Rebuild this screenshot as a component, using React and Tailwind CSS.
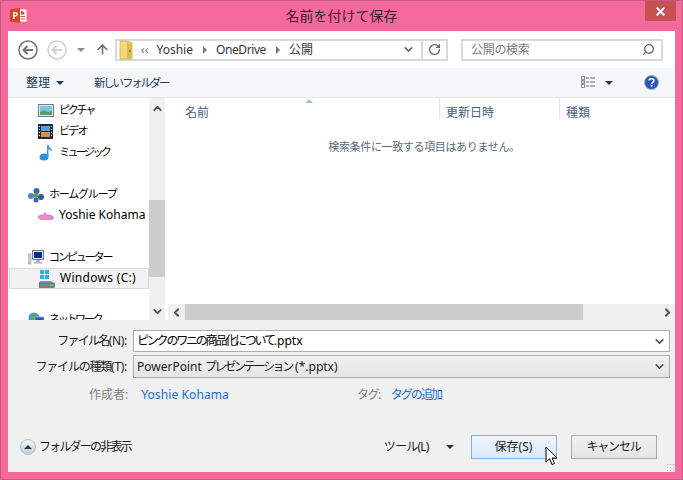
import React from "react";
import { X, ArrowUp, RotateCw, Search, ChevronDown, ChevronUp, ChevronLeft, ChevronRight } from "lucide-react";

const font = { fontFamily: '"Noto Sans", "Noto Sans CJK JP", sans-serif' };

function Caret({ className = "" }) {
  return <span className={`inline-block w-0 h-0 border-x-[4px] border-x-transparent border-t-[4px] ${className}`}></span>;
}

function PptLogo() {
  return (
    <svg width="17" height="15" viewBox="0 0 17 15">
      <rect x="7" y="1.5" width="9.5" height="12" fill="#fff" />
      <path d="M11 3v3.5h3.5A3.5 3.5 0 0 0 11 3z" fill="#d24726" />
      <rect x="10.5" y="8" width="4.5" height="1" fill="#d24726" />
      <rect x="10.5" y="10.5" width="4.5" height="1" fill="#d24726" />
      <path d="M0 1.5 10 0v15L0 13.500z" fill="#d24726" />
      <path d="M3 4h2.600a2 2 0 0 1 0 4.400H4.500V11H3zM4.500 5.300v1.900h.9a.95.95 0 0 0 0-1.900z" fill="#fff" fillRule="evenodd" />
    </svg>
  );
}

function NavCircle({ color }) {
  return (
    <svg width="20" height="20" viewBox="0 0 20 20" fill="none" stroke={color}>
      <circle cx="10" cy="10" r="9" strokeWidth="1.500" />
      <path d="M15 10H6M9.500 6 5.500 10l4 4" strokeWidth="2" />
    </svg>
  );
}

function FolderIcon() {
  return (
    <svg width="14" height="20" viewBox="0 0 14 20">
      <path d="M1 1h7l5 2v16H1z" fill="#f3d675" stroke="#c9a640" strokeWidth="0.700" />
      <path d="M8 2.500 13 4v13l-5 2.500z" fill="#e0b94f" />
      <rect x="10" y="10" width="1.500" height="2" fill="#54789c" />
    </svg>
  );
}

function PictureIcon() {
  return (
    <svg width="16" height="13" viewBox="0 0 16 13">
      <rect x="0.500" y="0.500" width="15" height="12" fill="#dfe6ec" stroke="#6d7f8f" />
      <rect x="2" y="2" width="12" height="9" fill="#7fc3e3" />
      <path d="M2 11V8l4-2 4 2 4-1v4z" fill="#5d9a6d" />
    </svg>
  );
}

function VideoIcon() {
  return (
    <svg width="15" height="15" viewBox="0 0 15 15">
      <rect width="15" height="15" fill="#1e2a38" />
      <rect x="3" y="2" width="9" height="5" fill="#5aa0d8" />
      <rect x="3" y="8" width="9" height="5" fill="#d98f4a" />
      <path d="M1 2h1v1H1zM1 5h1v1H1zM1 8h1v1H1zM1 11h1v1H1zM13 2h1v1h-1zM13 5h1v1h-1zM13 8h1v1h-1zM13 11h1v1h-1z" fill="#fff" />
    </svg>
  );
}

function MusicIcon() {
  return (
    <svg width="14" height="17" viewBox="0 0 14 17">
      <ellipse cx="5" cy="13" rx="4.500" ry="3.500" fill="#2f8fdc" />
      <path d="M8 1h1.500c.5 3 4 3 3.500 7-1-2-2.500-2.500-3.500-2.500V13H8z" fill="#3c9fe6" />
    </svg>
  );
}

function HomegroupIcon() {
  return (
    <svg width="16" height="16" viewBox="0 0 16 16">
      <circle cx="8.500" cy="4" r="3" fill="#3f62b5" />
      <circle cx="3" cy="9" r="3" fill="#5a7dc9" />
      <circle cx="13" cy="10" r="3" fill="#3355a8" />
      <circle cx="8" cy="13" r="2.500" fill="#3f62b5" />
      <circle cx="8" cy="8.500" r="2.500" fill="#54a83f" />
    </svg>
  );
}

function OnlineIcon() {
  return (
    <svg width="16" height="8" viewBox="0 0 16 8">
      <path d="M0 5c1-2 3-2 5-2l2-2.500L9 3c3 0 6 .5 7 3l-2 1.500H2z" fill="#e88ad0" stroke="#b45ea0" strokeWidth="0.500" />
    </svg>
  );
}

function ComputerIcon() {
  return (
    <svg width="16" height="15" viewBox="0 0 16 15">
      <rect x="0" y="4" width="3" height="10" fill="#c9d0d6" stroke="#7f8a92" strokeWidth="0.500" />
      <rect x="4.500" y="0.500" width="11" height="9" fill="#dfe5ea" stroke="#6c7a85" />
      <rect x="6" y="2" width="8" height="6" fill="#10288c" />
      <path d="M8 10h4v2h2v1.500H6V12h2z" fill="#aab4bc" />
    </svg>
  );
}

function DriveIcon() {
  return (
    <svg width="16" height="19" viewBox="0 0 16 19">
      <path d="M1 1h4v4H1zM6 1h4v4H6zM1 6h4v4H1zM6 6h4v4H6z" fill="#19b4ea" />
      <path d="M1 12h11l3 2v4.500H0V14z" fill="#8b979f" />
      <rect x="0.500" y="14" width="15" height="4.500" fill="#76858e" stroke="#4c5860" strokeWidth="0.500" />
      <rect x="11" y="15.500" width="3" height="1.500" fill="#58d05a" />
    </svg>
  );
}

function NetworkIcon() {
  return (
    <svg width="16" height="16" viewBox="0 0 16 16">
      <circle cx="6" cy="6" r="5.500" fill="#3b9be0" />
      <path d="M3 2h4l1 3-3 3-2-2z" fill="#55b04a" />
      <rect x="7" y="5" width="9" height="7" fill="#2c5bb5" stroke="#a7b3bd" strokeWidth="0.700" />
    </svg>
  );
}

function ViewIcon() {
  return (
    <svg width="15" height="13" viewBox="0 0 15 13" fill="none">
      <rect x="0.500" y="0.500" width="3" height="3" stroke="#8a8f96" />
      <rect x="0.500" y="4.500" width="3" height="3" stroke="#8a8f96" />
      <rect x="0.500" y="8.500" width="3" height="3" stroke="#8a8f96" />
      <rect x="1.500" y="5.500" width="1" height="1" fill="#d02c2c" />
      <path d="M5 2h3M9 2h5M5 6h3M9 6h5M5 10h3M9 10h5" stroke="#5d6670" />
    </svg>
  );
}

function HelpIcon() {
  return (
    <svg width="15" height="15" viewBox="0 0 15 15">
      <circle cx="7.500" cy="7.500" r="7" fill="#2b55b4" stroke="#9fb0cc" />
      <path d="M5 5.500c.3-2.200 5-2.200 5 0 0 1.800-2.400 1.800-2.400 3.500" fill="none" stroke="#fff" strokeWidth="1.500" />
      <rect x="6.800" y="10" width="1.600" height="1.600" fill="#fff" />
    </svg>
  );
}

function CursorIcon() {
  return (
    <svg width="13" height="20" viewBox="0 0 13 20">
      <path d="M1 1v15l3.500-3.300L7 18.500l2.500-1-2.400-5.500H12z" fill="#fff" stroke="#000" strokeWidth="1" />
    </svg>
  );
}

function NavRow({ icon, label, indent, textClass }) {
  return (
    <div className={`h-[21px] flex items-center shrink-0 ${indent ? "pl-[27px]" : "pl-[17px]"}`}>
      <span className="w-[21px] flex items-center justify-center shrink-0 mr-[1px]">{icon}</span>
      <span className={`ml-[2px] text-black whitespace-nowrap ${textClass}`}>{label}</span>
    </div>
  );
}

function Field({ label, children }) {
  return (
    <div className="flex items-center">
      <span className="w-[125px] pr-[6px] text-right text-[12px] text-[#1a1a1a] whitespace-nowrap">{label}</span>
      {children}
    </div>
  );
}

export default function App() {
  return (
    <div style={font} className="w-[683px] h-[480px] flex flex-col overflow-hidden bg-[#f56a9b] border border-[#c75a85]">
      {/* title bar */}
      <div className="h-[30px] shrink-0 flex items-start relative">
        <div className="absolute left-[9px] top-[7px]"><PptLogo /></div>
        <div className="flex-1 text-center text-[14px] leading-[30px] text-[#3a2030]">名前を付けて保存</div>
        <div className="absolute right-[6px] top-0 w-[31px] h-[20px] bg-[#c75050] flex items-center justify-center">
          <X size={13} strokeWidth={3.5} color="#fff" />
        </div>
      </div>

      <div className="flex-1 mx-[7px] mb-[7px] flex flex-col min-h-0 bg-[#f0f0f0]">
        {/* address row */}
        <div className="h-[37px] shrink-0 bg-white flex items-center pl-[10px] pr-[12px]">
          <NavCircle color="#6f7377" />
          <span className="ml-[9px]"><NavCircle color="#cfd2d4" /></span>
          <Caret className="ml-[10px] border-t-[#8a8a8a]" />
          <ArrowUp size={15} strokeWidth={2.5} color="#6a6e72" className="ml-[10px]" />
          <div className="ml-[5px] w-[333px] h-[22px] border-2 border-[#d9d9d9] bg-white flex items-center">
            <span className="ml-[2px] flex"><FolderIcon /></span>
            <span className="ml-[8px] text-[12px] text-[#666] leading-none">‹‹</span>
            <span className="ml-[8px] text-[12px] text-[#333]">Yoshie</span>
            <span className="ml-[10px] w-0 h-0 border-y-[4px] border-y-transparent border-l-[4px] border-l-[#777]"></span>
            <span className="ml-[9px] text-[12px] tracking-[-0.4px] text-[#333]">OneDrive</span>
            <span className="ml-[10px] w-0 h-0 border-y-[4px] border-y-transparent border-l-[4px] border-l-[#777]"></span>
            <span className="ml-[9px] text-[12px] text-[#333]">公開</span>
            <ChevronDown size={13} strokeWidth={3} color="#666" className="ml-auto mr-[6px]" />
            <span className="h-full w-[25px] border-l-2 border-[#d9d9d9] flex items-center justify-center">
              <RotateCw size={13} strokeWidth={2.5} color="#666" />
            </span>
          </div>
          <div className="ml-[13px] w-[202px] h-[22px] border-2 border-[#d9d9d9] bg-white flex items-center pl-[8px] pr-[6px]">
            <span className="text-[12px] tracking-[-0.3px] text-[#7a7a7a]">公開の検索</span>
            <Search size={13} strokeWidth={2.5} color="#666" className="ml-auto -scale-x-100" />
          </div>
        </div>

        {/* toolbar */}
        <div className="h-[30px] shrink-0 bg-[#f4f6f8] border-b border-[#e3e5e8] flex items-center pl-[18px] pr-[16px]">
          <span className="text-[12px] text-[#1e395b]">整理</span>
          <Caret className="ml-[6px] border-t-[#1e395b]" />
          <span className="ml-[30px] text-[11.5px] tracking-[-2.2px] text-[#1e395b]">新しいフォルダー</span>
          <span className="ml-auto mr-[-2px] flex"><ViewIcon /></span>
          <Caret className="ml-[11px] border-t-[#1e395b]" />
          <span className="ml-[31px] flex"><HelpIcon /></span>
        </div>

        {/* browser panes */}
        <div className="flex-1 min-h-0 flex bg-white">
          <div className="w-[141px] shrink-0 overflow-hidden flex flex-col pt-[2px]">
            <NavRow indent icon={<PictureIcon />} label="ピクチャ" textClass="text-[11px] tracking-[-2.2px]" />
            <NavRow indent icon={<VideoIcon />} label="ビデオ" textClass="text-[11px] tracking-[-1.7px]" />
            <NavRow indent icon={<MusicIcon />} label="ミュージック" textClass="text-[11px] tracking-[-2.6px]" />
            <div className="h-[21px] shrink-0"></div>
            <NavRow icon={<HomegroupIcon />} label="ホームグループ" textClass="text-[11px] tracking-[-1.2px]" />
            <NavRow indent icon={<OnlineIcon />} label="Yoshie Kohama" textClass="text-[12px] -mt-[2px]" />
            <div className="h-[21px] shrink-0"></div>
            <NavRow icon={<ComputerIcon />} label="コンピューター" textClass="text-[11px] tracking-[-2.1px]" />
            <div className="h-[21px] shrink-0 ml-[1px] border border-[#d9d9d9] bg-[#f2f2f2]">
              <div className="-ml-[1px] -mt-[1px]"><NavRow indent icon={<DriveIcon />} label="Windows (C:)" textClass="text-[12px] tracking-[0.3px] -mt-[2px]" /></div>
            </div>
            <div className="h-[20px] shrink-0"></div>
            <NavRow icon={<NetworkIcon />} label="ネットワーク" textClass="text-[11px] tracking-[-2.3px]" />
          </div>

          {/* nav scrollbar */}
          <div className="w-[16px] shrink-0 bg-[#f0f0f0] flex flex-col items-center">
            <ChevronUp size={13} strokeWidth={3.5} color="#505050" className="mt-[4px]" />
            <div className="mt-[85px] w-full h-[77px] bg-[#cdcdcd]"></div>
            <ChevronDown size={13} strokeWidth={3.5} color="#505050" className="mt-auto mb-[2px]" />
          </div>

          <div className="flex-1 min-w-0 flex flex-col">
            <div className="h-[21px] shrink-0 flex text-[12px] text-[#4c607a] relative">
              <span className="absolute left-[140px] top-[1px] w-0 h-0 border-x-[4px] border-x-transparent border-b-[4px] border-b-[#9cc0da]"></span>
              <span className="w-[275px] pl-[20px] border-r border-[#e5e5e5] leading-[29px]">名前</span>
              <span className="w-[120px] pl-[6px] border-r border-[#e5e5e5] leading-[29px]">更新日時</span>
              <span className="pl-[6px] leading-[29px]">種類</span>
            </div>
            <div className="flex-1 pt-[20px] pl-[8px] text-center text-[11px] tracking-[-0.35px] text-[#5a6b7c]">検索条件に一致する項目はありません。</div>
            <div className="h-[16px] shrink-0 flex items-center ml-[3px] bg-[#f0f0f0]">
              <span className="w-[17px] flex justify-center"><ChevronLeft size={13} strokeWidth={3.5} color="#505050" /></span>
              <span className="w-[398px] h-full bg-[#cdcdcd]"></span>
              <ChevronRight size={13} strokeWidth={3.5} color="#505050" className="ml-auto mr-[1px]" />
            </div>
          </div>
        </div>

        {/* bottom form */}
        <div className="h-[152px] shrink-0 flex flex-col relative">
          <div className="mt-[10px] flex flex-col gap-[3px]">
            <Field label={<><span className="tracking-[-1.7px]">ファイル名</span><span className="tracking-[-0.3px]">(N):</span></>}>
              <div className="w-[537px] h-[22px] border border-[#acacac] bg-white flex items-center pl-[3px] pr-[3px]">
                <span className="text-[12px] text-black whitespace-nowrap"><span className="tracking-[-2.2px]">ピンクのワニの商品化について</span>.pptx</span>
                <ChevronDown size={13} strokeWidth={3} color="#555" className="ml-auto" />
              </div>
            </Field>
            <Field label={<><span className="tracking-[-1.2px]">ファイルの種類</span><span className="tracking-[-0.3px]">(T):</span></>}>
              <div className="w-[537px] h-[23px] border border-[#acacac] bg-gradient-to-b from-[#f0f0f0] to-[#e5e5e5] flex items-center pl-[3px] pr-[3px]">
                <span className="text-[12px] text-[#1a1a1a] whitespace-nowrap">PowerPoint <span className="tracking-[-2.3px]">プレゼンテーション</span> (*.pptx)</span>
                <ChevronDown size={13} strokeWidth={3} color="#555" className="ml-auto" />
              </div>
            </Field>
          </div>
          <div className="mt-[8px] flex items-center text-[12px]">
            <span className="ml-[81px] text-[#808080]">作成者:</span>
            <span className="ml-[13px] tracking-[0.1px] text-[#1f6fd0]">Yoshie Kohama</span>
            <span className="ml-[128px] tracking-[-1.5px] text-[#808080]">タグ:</span>
            <span className="ml-[11px] tracking-[-1.9px] text-[#1f6fd0]">タグの追加</span>
          </div>
          <div className="mt-auto mb-[13px] flex items-center">
            <span className="ml-[12px] w-[16px] h-[16px] rounded-full bg-gradient-to-b from-[#f4f6f8] to-[#c5ccd3] border border-[#b8c0c8] flex items-center justify-center">
              <span className="w-0 h-0 border-x-[4px] border-x-transparent border-b-[4px] border-b-[#1e395b]"></span>
            </span>
            <span className="ml-[3px] text-[12px] tracking-[-1.8px] text-[#1a1a1a]">フォルダーの非表示</span>
            <span className="ml-[253px] text-[12px] tracking-[-0.8px] text-[#1a1a1a]">ツール(L)</span>
            <Caret className="ml-[17px] border-t-[#333]" />
            <span className="ml-[17px] w-[86px] h-[24px] border border-[#7eb4ea] bg-gradient-to-b from-[#ecf4fc] to-[#dcecfc] flex items-center justify-center text-[12px] text-[#1a1a1a]">保存(S)</span>
            <span className="ml-[14px] w-[86px] h-[24px] border border-[#acacac] bg-gradient-to-b from-[#f0f0f0] to-[#e5e5e5] flex items-center justify-center text-[12px] tracking-[-1.2px] text-[#1a1a1a]">キャンセル</span>
          </div>
          <span className="absolute right-[1px] bottom-[1px] w-[8px] h-[8px] bg-[radial-gradient(#b5b5b5_1px,transparent_1px)] bg-[length:3px_3px]"></span>
          <div className="absolute left-[537px] top-[126px] flex"><CursorIcon /></div>
        </div>
      </div>
    </div>
  );
}
